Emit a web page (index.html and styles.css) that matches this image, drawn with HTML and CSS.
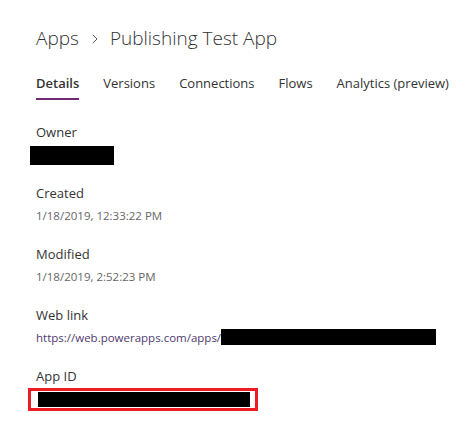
FILE: index.html
```html
<!DOCTYPE html>
<html lang="en">
<head>
<meta charset="utf-8">
<title>Publishing Test App</title>
<link rel="stylesheet" href="styles.css">
</head>
<body>
<div class="page">
  <h1 class="crumbs">
    <span class="crumb">Apps</span>
    <svg class="chev" width="6" height="10" viewBox="0 0 6 10" aria-hidden="true"><path d="M0.8 0.8 L5 5 L0.8 9.2" fill="none" stroke="#555" stroke-width="1"/></svg>
    <span class="crumb">Publishing Test App</span>
  </h1>
  <nav class="tabs">
    <span class="tab active">Details</span>
    <span class="tab">Versions</span>
    <span class="tab">Connections</span>
    <span class="tab">Flows</span>
    <span class="tab">Analytics (preview)</span>
  </nav>
  <div class="fields">
    <div class="field">
      <div class="label">Owner</div>
      <div class="value"><span class="redact owner"></span></div>
    </div>
    <div class="field">
      <div class="label">Created</div>
      <div class="value">1/18/2019, 12:33:22 PM</div>
    </div>
    <div class="field">
      <div class="label">Modified</div>
      <div class="value">1/18/2019, 2:52:23 PM</div>
    </div>
    <div class="field">
      <div class="label">Web link</div>
      <div class="value link">https://web.powerapps.com/apps/<span class="redact url"></span></div>
    </div>
    <div class="field">
      <div class="label">App ID</div>
      <div class="value"><span class="highlight"><span class="redact appid"></span></span></div>
    </div>
  </div>
</div>
</body>
</html>
```

FILE: styles.css
```css
html, body {
  margin: 0;
  padding: 0;
  background: #ffffff;
}
body {
  font-family: "Open Sans", "Noto Sans", "Liberation Sans", sans-serif;
  color: #333333;
}
.page {
  width: 470px;
  height: 430px;
  padding: 24px 0 0 36px;
  box-sizing: border-box;
}
.crumbs {
  margin: 0;
  display: flex;
  align-items: center;
  font-size: 19px;
  font-weight: 300;
  line-height: 28px;
  color: #333333;
  white-space: nowrap;
}
.chev {
  display: block;
  margin: 1px 12px 0 13px;
}
.tabs {
  display: flex;
  gap: 24px;
  margin-top: 21px;
  font-size: 13px;
  line-height: 20px;
  white-space: nowrap;
}
.tab {
  padding-bottom: 5px;
  border-bottom: 2px solid transparent;
  color: #333333;
}
.tab.active {
  font-weight: 600;
  border-bottom-color: #742774;
}
.fields {
  margin-top: 22px;
}
.field {
  margin-bottom: 19px;
}
.label {
  font-size: 13px;
  line-height: 20px;
  height: 20px;
  color: #333333;
}
.value {
  margin-top: 4px;
  font-size: 11.5px;
  line-height: 18px;
  height: 18px;
  color: #666666;
  white-space: nowrap;
}
.value.link {
  color: #4f3a70;
}
.redact {
  display: inline-block;
  background: #000000;
}
.redact.owner {
  display: block;
  width: 84px;
  height: 19px;
  margin: 1px 0 0 -6px;
}
.redact.url {
  width: 215px;
  height: 16px;
  vertical-align: -3px;
}
.highlight {
  display: inline-block;
  margin: -2px 0 0 -8px;
  border: 3px solid #ed1c24;
  padding: 1px 5px 1px 7px;
  line-height: 0;
}
.redact.appid {
  width: 212px;
  height: 15px;
}
```
